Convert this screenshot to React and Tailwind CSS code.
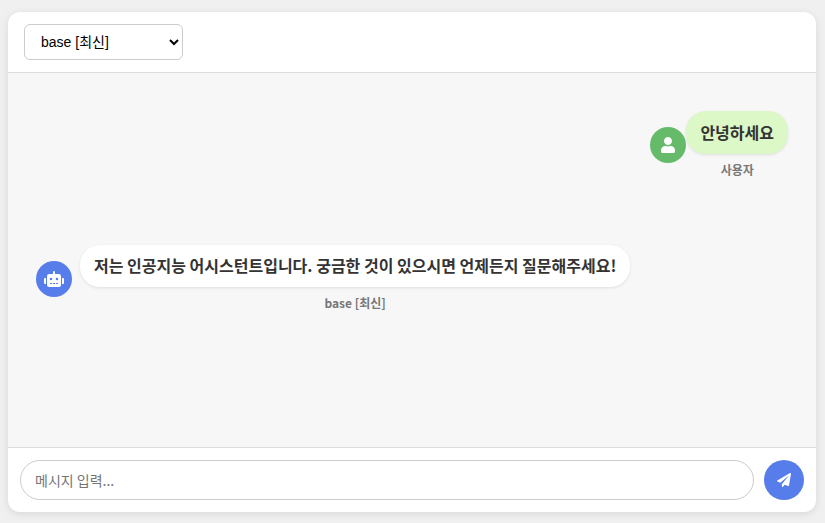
import React from 'react';
import { FaUser, FaRobot, FaPaperPlane } from 'react-icons/fa';

const font = "font-['Noto_Sans_CJK_KR','Noto_Sans',sans-serif]";

const Message = ({ side, icon, avatarColor, avatarOffset, bubbleColor, bubbleHeight, text, label, className }) => {
    const isUser = side === 'user';
    return (
        <div className={`flex flex-col ${isUser ? 'items-end' : 'items-start'} ${className}`}>
            <div className="flex flex-col items-stretch">
                <div className="flex items-end">
                    <div className={`w-9 h-9 rounded-full flex items-center justify-center text-white text-base ${avatarOffset} ${avatarColor} ${isUser ? '' : 'mr-2'}`}>
                        {icon}
                    </div>
                    <div className={`flex items-center px-3.5 pb-[2px] rounded-[20px] shadow-[0_1px_3px_rgba(0,0,0,0.1)] text-base font-bold leading-none text-[#333] ${bubbleHeight} ${bubbleColor}`}>
                        {text}
                    </div>
                </div>
                <div className={`mt-2 text-xs font-bold leading-[16px] text-[#777] text-center ${isUser ? 'pl-[36px]' : 'pl-[44px]'}`}>
                    {label}
                </div>
            </div>
        </div>
    );
};

const App = () => {
    return (
        <div className={`h-[523px] bg-[#f0f0f0] pl-2 pr-[9px] pt-3 pb-[11px] ${font}`}>
            <div className="h-full flex flex-col bg-white rounded-xl overflow-hidden shadow-[0_2px_8px_rgba(0,0,0,0.1)]">
                <div className="h-[61px] shrink-0 flex items-start px-4 pt-3 border-b border-[#ddd]">
                    <select className="w-[159px] h-9 px-3 rounded-md border border-[#ccc] bg-white text-sm text-black font-['Liberation_Sans','Noto_Sans_CJK_KR',sans-serif]">
                        <option>base [최신]</option>
                    </select>
                </div>

                <div className="flex-1 bg-[#f7f7f7] px-7 pt-[38px]">
                    <Message
                        side="user"
                        icon={<FaUser />}
                        avatarColor="bg-[#66bb6a]"
                        avatarOffset="-mb-[9px]"
                        bubbleColor="bg-[#dcf8c6]"
                        bubbleHeight="h-[43px]"
                        text="안녕하세요"
                        label="사용자"
                        className="mb-[67px]"
                    />
                    <Message
                        side="bot"
                        icon={<FaRobot className="text-xl" />}
                        avatarColor="bg-[#567de9]"
                        avatarOffset="-mb-[10px]"
                        bubbleColor="bg-white"
                        bubbleHeight="h-[42px]"
                        text="저는 인공지능 어시스턴트입니다. 궁금한 것이 있으시면 언제든지 질문해주세요!"
                        label="base [최신]"
                    />
                </div>

                <div className="h-[65px] shrink-0 flex items-start gap-2.5 px-3 pt-3 border-t border-[#ddd]">
                    <input
                        className="flex-1 h-10 px-[14px] rounded-[20px] border border-[#ccc] text-sm outline-none placeholder:text-[#757575]"
                        placeholder="메시지 입력..."
                    />
                    <button className="w-10 h-10 rounded-full bg-[#567de9] flex items-center justify-center text-white text-sm">
                        <FaPaperPlane />
                    </button>
                </div>
            </div>
        </div>
    );
};

export default App;
